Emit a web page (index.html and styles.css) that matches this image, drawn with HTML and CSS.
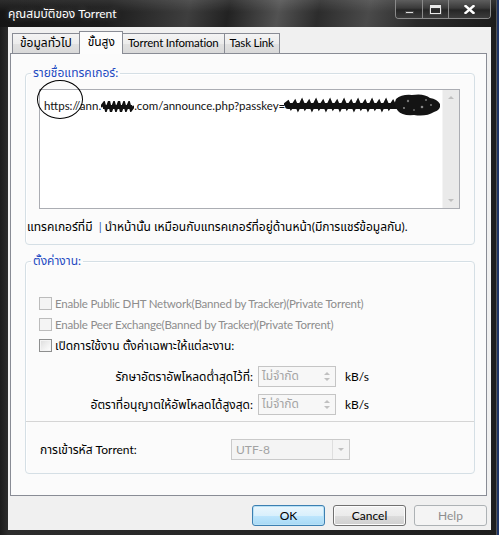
FILE: index.html
```html
<!DOCTYPE html>
<html lang="th">
<head>
<meta charset="utf-8">
<title>คุณสมบัติของ Torrent</title>
<link rel="stylesheet" href="styles.css">
</head>
<body>
<div class="window">
  <div class="titlebar">
    <span class="title">คุณสมบัติของ Torrent</span>
    <div class="caption-btns">
      <span class="cbtn min"><i class="min-glyph"></i></span>
      <span class="cbtn max"><i class="max-glyph"></i></span>
      <span class="cbtn close">
        <svg width="11" height="9" viewBox="0 0 11 9"><path d="M1.5 1 L9.5 8 M9.5 1 L1.5 8" stroke="#fff" stroke-width="2.4" stroke-linecap="square"/></svg>
      </span>
    </div>
  </div>
  <div class="client">
    <div class="tabs">
      <span class="tab th first">ข้อมูลทั่วไป</span>
      <span class="tab th active">ขั้นสูง</span>
      <span class="tab">Torrent Infomation</span>
      <span class="tab">Task Link</span>
    </div>
    <div class="panel">
      <fieldset class="group g1">
        <legend class="th">รายชื่อแทรคเกอร์:</legend>
        <div class="textarea">
          <div class="ta-text">https://ann.<svg class="scrib s1" width="33" height="11" viewBox="0 0 33 11"><path d="M0 6 L3 2 L5 9 L8 1 L10 10 L13 2 L15 9 L18 1 L20 10 L23 2 L25 9 L28 2 L30 9 L33 5" fill="none" stroke="#111" stroke-width="2.6"/><rect x="2" y="4" width="29" height="4" fill="#111"/></svg>.com/announce.php?passkey=<svg class="scrib s2" width="158" height="24" viewBox="0 0 158 24"><path d="M0 12 L4 9 L7 15 L11 9 L14 16 L18 8 L21 15 L25 9 L28 16 L32 8 L35 15 L39 9 L42 16 L46 8 L49 15 L53 9 L56 16 L60 8 L63 15 L67 9 L70 16 L74 8 L77 15 L81 9 L84 16 L88 8 L91 15 L95 9 L98 16 L102 8 L105 15 L109 9 L112 15" fill="none" stroke="#111" stroke-width="3"/><rect x="1" y="10" width="152" height="6" rx="3" fill="#111"/><path d="M112 6 Q118 1 128 2 Q140 0 146 5 Q153 6 156 11 Q157 17 150 19 Q142 24 130 22 Q118 23 114 18 Q109 12 112 6 Z" fill="#141414"/><circle cx="124" cy="8" r="1.2" fill="#777"/><circle cx="138" cy="14" r="1.3" fill="#888"/><circle cx="130" cy="17" r="1" fill="#666"/><circle cx="142" cy="7" r="1" fill="#777"/><circle cx="120" cy="15" r="0.9" fill="#999"/><circle cx="147" cy="12" r="0.9" fill="#888"/></svg></div>
          <div class="vscroll">
            <span class="arr up"></span>
            <span class="arr down"></span>
          </div>
        </div>
        <p class="hint th">แทรคเกอร์ที่มี &nbsp;<span class="pipe">|</span> นำหน้านั้น เหมือนกับแทรคเกอร์ที่อยู่ด้านหน้า(มีการแชร์ข้อมูลกัน).</p>
      </fieldset>
      <fieldset class="group g2">
        <legend class="th">ตั้งค่างาน:</legend>
        <div class="check disabled"><span class="box"></span><span class="lat">Enable Public DHT Network(Banned by Tracker)(Private Torrent)</span></div>
        <div class="check disabled"><span class="box"></span><span class="lat">Enable Peer Exchange(Banned by Tracker)(Private Torrent)</span></div>
        <div class="check th"><span class="box"></span><span>เปิดการใช้งาน ตั้งค่าเฉพาะให้แต่ละงาน:</span></div>
        <div class="rate-row first">
          <span class="rate-label th">รักษาอัตราอัพโหลดต่ำสุดไว้ที่:</span>
          <span class="spin"><span class="spin-val th">ไม่จำกัด</span><span class="spin-btns"><span class="tri up"></span><span class="tri down"></span></span></span>
          <span class="unit">kB/s</span>
        </div>
        <div class="rate-row">
          <span class="rate-label th">อัตราที่อนุญาตให้อัพโหลดได้สูงสุด:</span>
          <span class="spin"><span class="spin-val th">ไม่จำกัด</span><span class="spin-btns"><span class="tri up"></span><span class="tri down"></span></span></span>
          <span class="unit">kB/s</span>
        </div>
        <div class="sep"></div>
        <div class="enc-row">
          <span class="enc-label th">การเข้ารหัส Torrent:</span>
          <span class="combo"><span class="combo-val">UTF-8</span><span class="combo-btn"><span class="tri down"></span></span></span>
        </div>
      </fieldset>
    </div>
    <div class="buttons">
      <span class="btn ok">OK</span>
      <span class="btn">Cancel</span>
      <span class="btn disabled">Help</span>
    </div>
  </div>
  <div class="circle-mark"></div>
</div>
</body>
</html>
```
FILE: styles.css
```css
* { box-sizing: border-box; }
html, body { margin: 0; padding: 0; }
body {
  width: 499px;
  height: 535px;
  overflow: hidden;
  background: #1f3566;
  font-family: "Lato", "Noto Sans Thai", "Loma", "Garuda", sans-serif;
  font-size: 11.5px;
  letter-spacing: -0.2px;
  color: #000;
}
.th { font-size: 12px; letter-spacing: 0; }
.lat { font-size: 11.5px; letter-spacing: -0.2px; }
.window {
  position: relative;
  width: 497px;
  height: 535px;
  background: linear-gradient(90deg, #1b1b1b 0, #2c2c2c 8px, #1e1e1e 100%);
  display: flex;
  flex-direction: column;
  border-right: 1px solid #555;
}
.titlebar {
  height: 27px;
  display: flex;
  justify-content: space-between;
  align-items: flex-start;
  padding: 0 5px 0 8px;
  letter-spacing: 0;
  background:
    linear-gradient(180deg, rgba(255,255,255,0.10) 0, rgba(0,0,0,0) 12px),
    linear-gradient(100deg, #151515 0%, #1c1c1c 22%, #3e3e3e 38%, #222 46%, #525252 56%, #2c2c2c 64%, #4a4a4a 74%, #2a2a2a 84%, #1b1b1b 100%);
}
.title {
  color: #fff;
  line-height: 27px;
  font-size: 12px;
  text-shadow: 0 0 6px rgba(255,255,255,0.35);
}
.caption-btns {
  display: flex;
  height: 19px;
  border: 1px solid #8a8a8a;
  border-top: none;
  border-radius: 0 0 4px 4px;
  overflow: hidden;
}
.cbtn {
  height: 18px;
  display: flex;
  align-items: center;
  justify-content: center;
  background: linear-gradient(180deg, #5e5e5e 0, #3a3a3a 45%, #262626 55%, #3c3c3c 100%);
  border-left: 1px solid #8a8a8a;
}
.cbtn:first-child { border-left: none; }
.cbtn.min { width: 26px; }
.cbtn.max { width: 26px; }
.cbtn.close { width: 42px; }
.min-glyph {
  display: block;
  width: 9px;
  height: 3px;
  margin-top: 7px;
  background: #dcdcdc;
  border: 1px solid #444;
}
.max-glyph {
  display: block;
  width: 11px;
  height: 9px;
  border: 1px solid #e8e8e8;
  border-top-width: 3px;
  box-shadow: 0 0 0 1px #444;
}
.client {
  height: 503px;
  margin: 0 5px 0 8px;
  background: #f0f0f0;
  padding: 4px 4px 0 2px;
  display: flex;
  flex-direction: column;
}
.tabs {
  display: flex;
  align-items: flex-end;
  height: 22px;
  padding-left: 2px;
  position: relative;
  z-index: 1;
}
.tab {
  height: 20px;
  line-height: 18px;
  padding: 0 5px;
  border: 1px solid #898c95;
  border-bottom: none;
  margin-left: -1px;
  background: linear-gradient(180deg, #f4f4f4 0, #ececec 50%, #e1e1e1 51%, #d9d9d9 100%);
  white-space: nowrap;
}
.tab.first { margin-left: 0; padding: 0 7px; }
.tab.active {
  height: 23px;
  margin: 0 -1px -1px -1px;
  padding: 0 7px 0 8px;
  background: #fcfcfc;
  position: relative;
  z-index: 2;
  line-height: 20px;
}
.tab.active + .tab { margin-left: 0; }
.panel {
  height: 443px;
  border: 1px solid #898c95;
  background: #fbfbfb;
  padding: 0 11px 0 14px;
}
.group {
  margin: 0;
  border: 1px solid #d5dfe5;
  border-radius: 4px;
  padding: 0;
  min-width: 0;
  box-shadow: inset 1px 1px 0 #fff;
}
.group legend {
  color: #1e4ac2;
  padding: 0 2px;
  margin-left: 5px;
  line-height: 16px;
}
.g1 { margin-top: 11px; padding: 8px 0 9px 0; }
.textarea {
  margin-left: 13px;
  width: 421px;
  height: 120px;
  border: 1px solid #abadb3;
  background: #fff;
  display: flex;
}
.ta-text {
  flex: 1;
  padding: 3px 0 0 4px;
  line-height: 16px;
  font-size: 11.5px;
  letter-spacing: 0;
  color: #111;
  white-space: nowrap;
  overflow: hidden;
}
.scrib { vertical-align: -2px; }
.scrib.s2 { vertical-align: -7px; margin-left: -1px; }
.vscroll {
  width: 17px;
  background: #eaeaea;
  border-left: 1px solid #f4f4f4;
  display: flex;
  flex-direction: column;
  justify-content: space-between;
  align-items: center;
  padding: 6px 0 6px;
}
.arr {
  width: 0; height: 0;
  border-left: 3px solid transparent;
  border-right: 3px solid transparent;
}
.arr.up { border-bottom: 3px solid #bfbfbf; }
.arr.down { border-top: 3px solid #bfbfbf; }
.hint {
  margin: 10px 0 0 1px;
  line-height: 16px;
  white-space: nowrap;
}
.pipe { color: #3a5fb0; }
.g2 { margin-top: 8px; padding: 24px 0 13px 0; }
.check {
  display: flex;
  align-items: center;
  height: 21px;
  padding-left: 13px;
}
.check .box {
  width: 13px;
  height: 13px;
  border: 1px solid #8e8f8f;
  background: linear-gradient(135deg, #dcdcdc 0, #f2f2f2 60%, #fff 100%);
  box-shadow: inset 0 0 0 1px #f4f4f4;
  margin-right: 3px;
  flex: none;
}
.check.disabled { color: #8d8d8d; }
.check.disabled .box {
  border-color: #bcbcbc;
  background: #f4f4f4;
}
.rate-row {
  display: flex;
  align-items: center;
  height: 21px;
  margin-top: 7px;
}
.rate-row.first { margin-top: 10px; }
.rate-label {
  width: 227px;
  text-align: right;
  white-space: nowrap;
}
.spin {
  margin-left: 5px;
  width: 78px;
  height: 21px;
  border: 1px solid #c5c5c5;
  background: #f7f7f7;
  display: flex;
}
.spin-val {
  flex: 1;
  color: #a5a5a5;
  padding-left: 3px;
  line-height: 18px;
}
.spin-btns {
  width: 17px;
  display: flex;
  flex-direction: column;
  justify-content: space-around;
  align-items: center;
  padding: 3px 0;
}
.tri {
  width: 0; height: 0;
  border-left: 3px solid transparent;
  border-right: 3px solid transparent;
}
.tri.up { border-bottom: 3px solid #c0c0c0; }
.tri.down { border-top: 3px solid #c0c0c0; }
.unit { margin-left: 9px; font-size: 12px; letter-spacing: 0; }
.sep {
  height: 1px;
  background: #d5d5d5;
  margin-top: 6px;
}
.enc-row {
  display: flex;
  align-items: center;
  height: 21px;
  margin-top: 17px;
}
.enc-label {
  width: 205px;
  padding-left: 14px;
}
.combo {
  width: 119px;
  height: 21px;
  border: 1px solid #cacaca;
  background: #f4f4f4;
  display: flex;
}
.combo-val {
  flex: 1;
  color: #a2a2a2;
  padding-left: 4px;
  line-height: 19px;
  font-size: 12px;
  letter-spacing: 0;
}
.combo-btn {
  width: 17px;
  border-left: 1px solid #dedede;
  display: flex;
  align-items: center;
  justify-content: center;
}
.buttons {
  display: flex;
  justify-content: flex-end;
  gap: 8px;
  margin-top: 9px;
}
.btn {
  width: 73px;
  height: 21px;
  border: 1px solid #707070;
  border-radius: 3px;
  text-align: center;
  line-height: 19px;
  font-size: 12px;
  letter-spacing: 0;
  background: linear-gradient(180deg, #f2f2f2 0, #ebebeb 50%, #dddddd 51%, #cfcfcf 100%);
  box-shadow: inset 0 0 0 1px #fcfcfc;
}
.btn.ok {
  border-color: #3c7fb1;
  background: linear-gradient(180deg, #eaf6fd 0, #d9f0fc 50%, #bee6fd 51%, #a7d9f5 100%);
  box-shadow: inset 0 0 0 1px #b8e1f6;
}
.btn.disabled {
  color: #8e8e8e;
  border-color: #adb2b5;
  background: #f4f4f4;
  box-shadow: none;
}
.circle-mark {
  position: absolute;
  left: 37px;
  top: 80px;
  width: 46px;
  height: 39px;
  border: 1px solid #000;
  border-radius: 50%;
  pointer-events: none;
}
```
